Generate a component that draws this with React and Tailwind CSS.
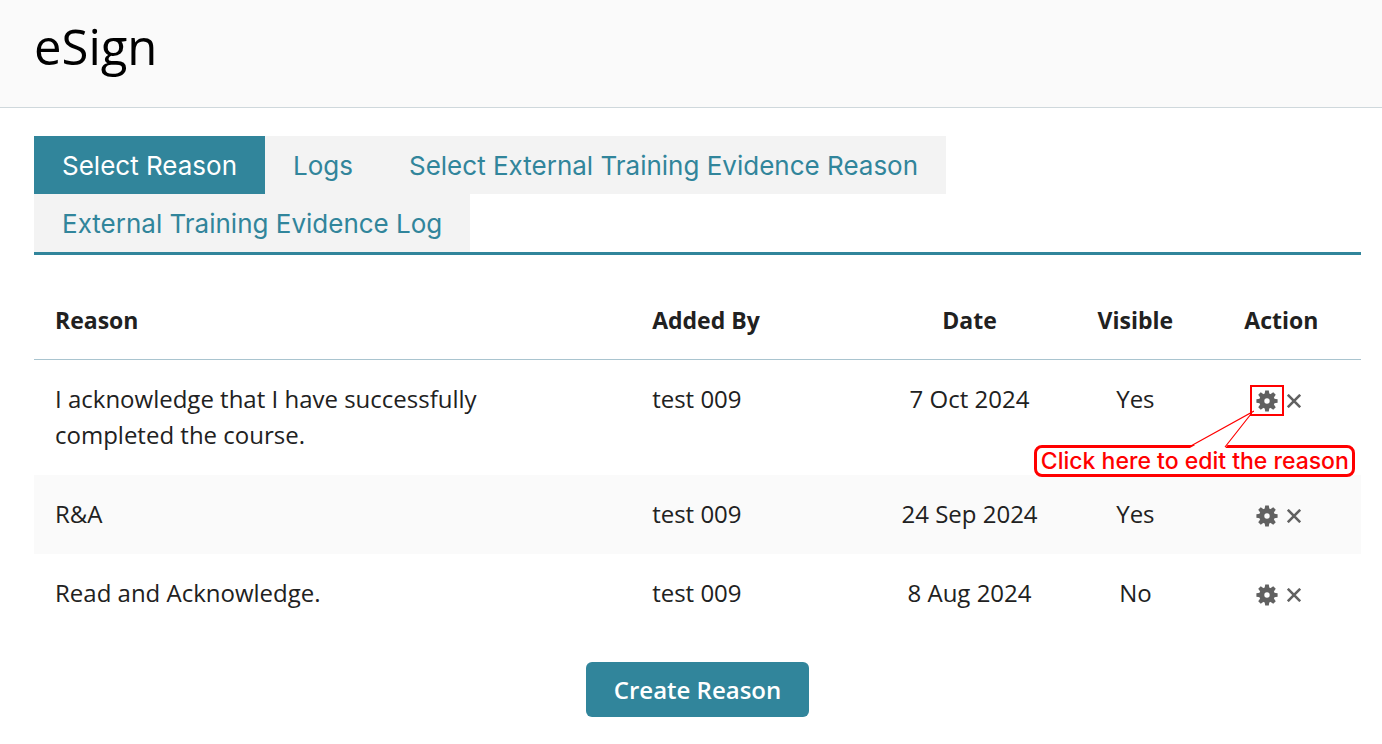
import React, { useState } from 'react';

const TABS = [
    { id: 'reason', name: 'Select Reason' },
    { id: 'logs', name: 'Logs' },
    { id: 'external-reason', name: 'Select External Training Evidence Reason' },
    { id: 'external-log', name: 'External Training Evidence Log' }
];

const REASONS = [
    { id: 1, text: 'I acknowledge that I have successfully completed the course.', addedBy: 'test 009', date: '7 Oct 2024', visible: true, hint: true },
    { id: 2, text: 'R&A', addedBy: 'test 009', date: '24 Sep 2024', visible: true },
    { id: 3, text: 'Read and Acknowledge.', addedBy: 'test 009', date: '8 Aug 2024', visible: false }
];

function GearIcon() {
    return (
        <svg viewBox="0 0 22 22" className="w-[22px] h-[22px]" fill="currentColor" aria-hidden="true">
            <path
                fillRule="evenodd"
                d="M11 3.2a7.8 7.8 0 1 0 0 15.6a7.8 7.8 0 1 0 0-15.6zM11 8.3a2.7 2.7 0 1 1 0 5.4a2.7 2.7 0 1 1 0-5.4z"
            />
            {[0, 45, 90, 135, 180, 225, 270, 315].map(angle => (
                <path key={angle} d="M9.2 0.4h3.6l0.8 5h-5.2z" transform={`rotate(${angle} 11 11)`} />
            ))}
        </svg>
    );
}

function CloseIcon() {
    return (
        <svg viewBox="0 0 14 14" className="w-[14px] h-[14px]" fill="none" stroke="currentColor" strokeWidth="2.6" aria-hidden="true">
            <path d="M0.8 0.8L13.2 13.2M13.2 0.8L0.8 13.2" />
        </svg>
    );
}

function EditHint() {
    return (
        <div className="absolute top-0 right-0 pointer-events-none text-[#ff0000]">
            <div className="absolute -top-[5px] -right-[6px] w-[34px] h-[31px] border-2 border-[#ff0000]" />
            <div className="absolute top-[55px] -right-[77px] h-8 w-[321px] flex items-center justify-center rounded-lg border-3 border-[#ff0000] bg-white font-['Inter',sans-serif] font-medium text-[23px] leading-none whitespace-nowrap">
                Click here to edit the reason
            </div>
            <svg viewBox="0 0 70 40" className="absolute top-[20px] right-[24px] w-[70px] h-[40px] max-w-none" aria-hidden="true">
                <path d="M5 38.5L66 4L41 38.5z" fill="#fff" />
                <path d="M5 37L70 1M67 4L41 37" fill="none" stroke="currentColor" strokeWidth="1.2" />
            </svg>
        </div>
    );
}

export default function App() {
    const [activeTab, setActiveTab] = useState('reason');

    return (
        <div className="min-h-screen bg-white font-['Open_Sans',sans-serif] text-[#212121]">
            <header className="bg-[#fafafa] border-b border-[#cfd8dc] px-[34px] pt-3.5 pb-[29px]">
                <h1 className="text-[49px] leading-16 text-black">eSign</h1>
            </header>

            <main className="pl-[34px] pr-[21px] pt-7 pb-7">
                <div role="tablist" className="flex flex-wrap border-b-3 border-[#31859b]">
                    {TABS.map(tab => (
                        <button
                            key={tab.id}
                            type="button"
                            role="tab"
                            aria-selected={activeTab === tab.id}
                            onClick={() => setActiveTab(tab.id)}
                            className={`h-[58px] px-7 font-['Inter',sans-serif] text-[26px] ${
                                activeTab === tab.id
                                    ? 'bg-[#31859b] text-white'
                                    : 'bg-[#f3f3f3] text-[#31859b]'
                            }`}
                        >
                            {tab.name}
                        </button>
                    ))}
                </div>

                <table className="w-full table-fixed mt-[26px] text-2xl leading-9">
                    <thead className="text-[23px]">
                        <tr className="border-b border-[#a9c4cf]">
                            <th className="w-[45%] px-[21px] py-[21px] text-left font-bold">Reason</th>
                            <th className="w-[18%] px-[21px] text-left font-bold">Added By</th>
                            <th className="w-[15%] text-center font-bold">Date</th>
                            <th className="w-[10%] text-center font-bold">Visible</th>
                            <th className="w-[12%] text-center font-bold">Action</th>
                        </tr>
                    </thead>
                    <tbody>
                        {REASONS.map(reason => (
                            <tr key={reason.id} className="align-top even:bg-[#fafafa]">
                                <td className="pl-[21px] pr-16 pt-[21px] pb-[22px]">{reason.text}</td>
                                <td className="px-[21px] pt-[21px] pb-[22px]">{reason.addedBy}</td>
                                <td className="pt-[21px] pb-[22px] text-center">{reason.date}</td>
                                <td className="pt-[21px] pb-[22px] text-center">{reason.visible ? 'Yes' : 'No'}</td>
                                <td className="pt-[21px] pr-[5px]">
                                    <div className="flex h-10 items-center justify-center gap-[9px] text-[#616161]">
                                        <div className="relative flex">
                                            <button type="button" aria-label="Edit reason">
                                                <GearIcon />
                                            </button>
                                            {reason.hint && <EditHint />}
                                        </div>
                                        <button type="button" aria-label="Remove reason">
                                            <CloseIcon />
                                        </button>
                                    </div>
                                </td>
                            </tr>
                        ))}
                    </tbody>
                </table>

                <div className="mt-[29px] flex justify-center">
                    <button type="button" className="h-[55px] px-7 rounded-md bg-[#31859b] text-white text-2xl font-semibold">
                        Create Reason
                    </button>
                </div>
            </main>
        </div>
    );
}
